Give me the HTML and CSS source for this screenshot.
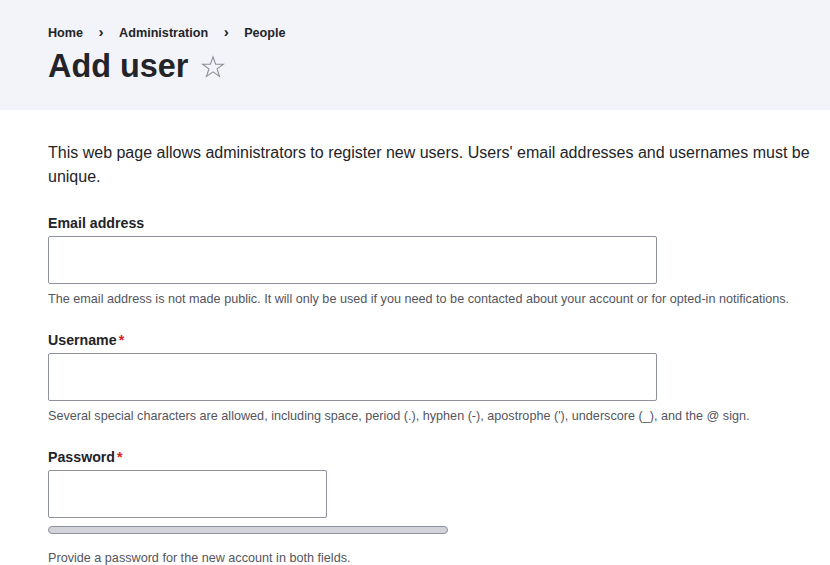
FILE: index.html
```html
<!DOCTYPE html>
<html lang="en">
<head>
<meta charset="utf-8">
<title>Add user</title>
<link rel="stylesheet" href="styles.css">
</head>
<body>
<header class="page-header">
  <nav class="breadcrumb">
    <a href="#" class="crumb">Home</a><span class="sep">›</span><a href="#" class="crumb">Administration</a><span class="sep">›</span><a href="#" class="crumb">People</a>
  </nav>
  <div class="title-row">
    <h1 class="title">Add user</h1>
    <svg class="star" width="24" height="24" viewBox="0 0 24 24" aria-hidden="true">
      <polygon points="12,1.8 14.6,9.2 22.4,9.2 16.1,13.9 18.5,21.4 12,16.8 5.5,21.4 7.9,13.9 1.6,9.2 9.4,9.2" fill="none" stroke="#8e8f96" stroke-width="1.1" stroke-linejoin="miter"/>
    </svg>
  </div>
</header>
<main class="content">
  <p class="intro">This web page allows administrators to register new users. Users' email addresses and usernames must be unique.</p>
  <div class="field">
    <label class="label">Email address</label>
    <input class="input input-wide" type="email">
    <div class="desc">The email address is not made public. It will only be used if you need to be contacted about your account or for opted-in notifications.</div>
  </div>
  <div class="field">
    <label class="label">Username<span class="req">*</span></label>
    <input class="input input-wide" type="text">
    <div class="desc">Several special characters are allowed, including space, period (.), hyphen (-), apostrophe ('), underscore (_), and the @ sign.</div>
  </div>
  <div class="field">
    <label class="label">Password<span class="req">*</span></label>
    <input class="input input-narrow" type="password">
    <div class="strength"></div>
    <div class="desc desc-pass">Provide a password for the new account in both fields.</div>
  </div>
</main>
</body>
</html>
```

FILE: styles.css
```css
* { box-sizing: border-box; }
html, body {
  margin: 0;
  padding: 0;
  background: #fff;
  font-family: "Liberation Sans", Arial, sans-serif;
  color: #232429;
}
.page-header {
  background: #f3f4f9;
  padding: 23px 48px 24px;
  height: 110px;
}
.breadcrumb {
  display: flex;
  align-items: center;
  font-size: 12.64px;
  font-weight: bold;
  line-height: 20px;
}
.crumb {
  color: #232429;
  text-decoration: none;
}
.sep {
  display: inline-block;
  width: 36px;
  text-align: center;
  font-size: 15px;
  font-weight: bold;
  position: relative;
  top: -1px;
}
.title-row {
  display: flex;
  align-items: center;
  margin-top: 3px;
  height: 40px;
}
.title {
  margin: 0;
  font-size: 32.4px;
  font-weight: bold;
  line-height: 40px;
  color: #232429;
}
.star {
  margin-left: 13px;
  margin-top: 2px;
}
.content {
  padding: 31px 16px 0 48px;
}
.intro {
  margin: 0 0 25px;
  font-size: 16px;
  line-height: 24px;
}
.field {
  display: flex;
  flex-direction: column;
  align-items: flex-start;
  margin-bottom: 23px;
}
.label {
  font-size: 14.2px;
  font-weight: bold;
  line-height: 18px;
  margin-bottom: 4px;
}
.req {
  color: #dc2323;
  margin-left: 2px;
}
.input {
  height: 48px;
  border: 1px solid #8e929c;
  border-radius: 2px;
  background: #fff;
  margin: 0;
  padding: 0 12px;
  font: inherit;
}
.input-wide { width: 609px; }
.input-narrow { width: 279px; }
.desc {
  margin-top: 7px;
  font-size: 12.64px;
  line-height: 17px;
  color: #545560;
}
.strength {
  margin-top: 8px;
  width: 400px;
  height: 8px;
  border: 1px solid #8e929c;
  border-radius: 4px;
  background: #d3d4d9;
}
.desc .x {}
.field .desc-pass {
  margin-top: 16px;
}
```
